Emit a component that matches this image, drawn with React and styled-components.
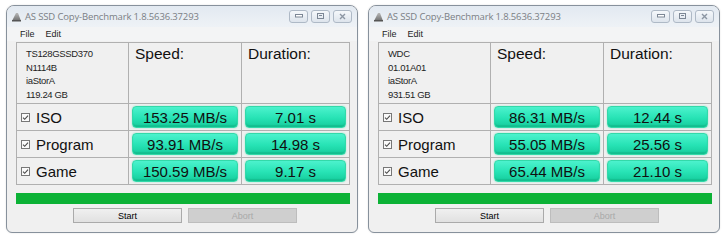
import React from "react";
import styled, { createGlobalStyle } from "styled-components";

const Global = createGlobalStyle`
  html, body { margin: 0; padding: 0; background: #ffffff; }
  body { width: 728px; height: 240px; overflow: hidden; font-family: "Liberation Sans", Arial, sans-serif; }
`;

const Page = styled.div`
  display: flex;
  gap: 10px;
  padding: 5px 0 0 6px;
`;

const Window = styled.div`
  width: 352px;
  height: 228px;
  box-sizing: border-box;
  border: 1px solid #87919c;
  border-radius: 8px 8px 6px 6px;
  background: #f0f0f0;
  box-shadow: 0 0 2px rgba(0, 0, 0, 0.12);
  display: flex;
  flex-direction: column;
  overflow: hidden;
`;

const TitleBar = styled.div`
  height: 21px;
  flex: none;
  display: flex;
  align-items: center;
  padding: 0 5px 0 4px;
  background: linear-gradient(#e2e9f1, #eef2f6);
`;

const TitleText = styled.div`
  margin-left: 3px;
  font-family: "Open Sans", "Liberation Sans", sans-serif;
  font-size: 9.5px;
  color: #7a7e84;
  letter-spacing: -0.15px;
  flex: 1;
`;

const CaptionGroup = styled.div`
  display: flex;
  gap: 3px;
  margin-top: -1px;
`;

const CaptionButton = styled.div`
  width: 19px;
  height: 13px;
  box-sizing: border-box;
  border: 1px solid #aeb9c6;
  border-radius: 3px;
  background: linear-gradient(#f5f8fb, #dde4ec);
  display: flex;
  align-items: center;
  justify-content: center;
`;

const MenuBar = styled.div`
  height: 14px;
  flex: none;
  display: flex;
  align-items: center;
  gap: 11px;
  padding-left: 13px;
  font-size: 9px;
  color: #1e1e1e;
  background: #f3f4f5;
`;

const Body = styled.div`
  flex: 1;
  display: flex;
  flex-direction: column;
  padding: 1px 0 0 9px;
`;

const Table = styled.div`
  display: grid;
  grid-template-columns: 111px 112px 107px;
  grid-template-rows: 60px 26px 26px 26px;
  gap: 1px;
  padding: 1px;
  width: max-content;
  background: #b0b0b0;
`;

const Cell = styled.div`
  background: #f0f0f0;
  display: flex;
  align-items: ${(p) => (p.$center ? "center" : "flex-start")};
  justify-content: ${(p) => (p.$center ? "center" : "flex-start")};
  box-sizing: border-box;
  min-width: 0;
`;

const Info = styled.div`
  font-size: 9.5px;
  line-height: 13.6px;
  color: #1e1e1e;
  letter-spacing: -0.35px;
  padding: 4px 0 0 9px;
`;

const Heading = styled.div`
  font-size: 15.5px;
  color: #111;
  padding: 2px 0 0 6px;
`;

const Label = styled.div`
  display: flex;
  align-items: center;
  gap: 6px;
  padding-left: 4px;
  font-size: 15px;
  color: #111;
  height: 100%;
`;

const Value = styled.div`
  width: 100%;
  height: 22px;
  margin: 0 3px;
  box-sizing: border-box;
  border-radius: 4px;
  border: 1px solid #33d9a9;
  background: linear-gradient(#4cf2cd 0%, #27e3b5 55%, #16cc9c 100%);
  box-shadow: inset 0 -2px 1px rgba(0, 120, 80, 0.18), 0 0 1.5px rgba(40, 220, 170, 0.6);
  display: flex;
  align-items: center;
  justify-content: center;
  font-size: 15px;
  color: #101010;
`;

const Progress = styled.div`
  width: 334px;
  height: 11px;
  margin-top: 8px;
  background: #0cb236;
`;

const ButtonRow = styled.div`
  display: flex;
  gap: 6px;
  margin-top: 4px;
  padding-left: 57px;
`;

const Button = styled.div`
  width: 109px;
  height: 15px;
  box-sizing: border-box;
  border: 1px solid ${(p) => (p.$disabled ? "#bdbdbd" : "#aaaaaa")};
  background: ${(p) => (p.$disabled ? "#cfcfcf" : "linear-gradient(#f0f0f0, #e1e1e1)")};
  color: ${(p) => (p.$disabled ? "#a9a9a9" : "#000")};
  font-size: 9px;
  display: flex;
  align-items: center;
  justify-content: center;
`;

const AppIcon = () => (
  <svg width="11" height="10" viewBox="0 0 11 10">
    <defs>
      <linearGradient id="ig" x1="0" y1="0" x2="0" y2="1">
        <stop offset="0" stopColor="#b8b8b8" />
        <stop offset="1" stopColor="#6e6e6e" />
      </linearGradient>
    </defs>
    <polygon points="1,9 5,1 7,1 10,9" fill="url(#ig)" />
    <rect x="1" y="8" width="9" height="1.5" fill="#555" />
  </svg>
);

const Check = () => (
  <svg width="9" height="9" viewBox="0 0 9 9">
    <rect x="0.5" y="0.5" width="8" height="8" fill="#fafafa" stroke="#777" />
    <path d="M2 4.6 L3.7 6.3 L7 2.6" fill="none" stroke="#4a4a4a" strokeWidth="1.1" />
  </svg>
);

const MinGlyph = () => (
  <svg width="8" height="4" viewBox="0 0 8 4">
    <rect x="0.5" y="0.5" width="7" height="2.5" fill="#fff" stroke="#7c8795" />
  </svg>
);
const MaxGlyph = () => (
  <svg width="7" height="6" viewBox="0 0 7 6">
    <rect x="0.5" y="0.5" width="6" height="5" fill="none" stroke="#7c8795" />
    <rect x="2" y="2" width="3" height="1" fill="#7c8795" />
  </svg>
);
const CloseGlyph = () => (
  <svg width="7" height="7" viewBox="0 0 7 7">
    <path d="M1 1 L6 6 M6 1 L1 6" stroke="#8c96a3" strokeWidth="1.4" />
  </svg>
);

const data = [
  {
    info: ["TS128GSSD370", "N1114B", "iaStorA", "119.24 GB"],
    rows: [
      ["ISO", "153.25 MB/s", "7.01 s"],
      ["Program", "93.91 MB/s", "14.98 s"],
      ["Game", "150.59 MB/s", "9.17 s"],
    ],
  },
  {
    info: ["WDC", "01.01A01", "iaStorA", "931.51 GB"],
    rows: [
      ["ISO", "86.31 MB/s", "12.44 s"],
      ["Program", "55.05 MB/s", "25.56 s"],
      ["Game", "65.44 MB/s", "21.10 s"],
    ],
  },
];

const BenchWindow = ({ info, rows }) => (
  <Window>
    <TitleBar>
      <AppIcon />
      <TitleText>AS SSD Copy-Benchmark 1.8.5636.37293</TitleText>
      <CaptionGroup>
        <CaptionButton><MinGlyph /></CaptionButton>
        <CaptionButton><MaxGlyph /></CaptionButton>
        <CaptionButton><CloseGlyph /></CaptionButton>
      </CaptionGroup>
    </TitleBar>
    <MenuBar>
      <span>File</span>
      <span>Edit</span>
    </MenuBar>
    <Body>
      <Table>
        <Cell>
          <Info>
            {info.map((l) => (
              <div key={l}>{l}</div>
            ))}
          </Info>
        </Cell>
        <Cell><Heading>Speed:</Heading></Cell>
        <Cell><Heading>Duration:</Heading></Cell>
        {rows.map(([name, speed, dur]) => (
          <React.Fragment key={name}>
            <Cell>
              <Label>
                <Check />
                {name}
              </Label>
            </Cell>
            <Cell $center><Value>{speed}</Value></Cell>
            <Cell $center><Value>{dur}</Value></Cell>
          </React.Fragment>
        ))}
      </Table>
      <Progress />
      <ButtonRow>
        <Button>Start</Button>
        <Button $disabled>Abort</Button>
      </ButtonRow>
    </Body>
  </Window>
);

export default function App() {
  return (
    <>
      <Global />
      <Page>
        {data.map((d, i) => (
          <BenchWindow key={i} {...d} />
        ))}
      </Page>
    </>
  );
}
